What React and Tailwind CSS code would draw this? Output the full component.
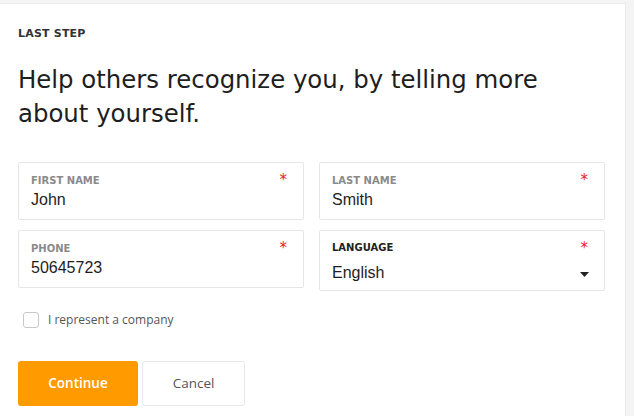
export default function App() {
  const mont = { fontFamily: '"DejaVu Sans", "Noto Sans", sans-serif' };
  return (
    <div className="min-h-screen bg-[#f4f4f4] pt-[3px] pr-[8px]" style={mont}>
      <div className="h-[413px] bg-white border border-l-0 border-b-0 border-[#ebebeb] pl-[18px] pr-[20px] pt-[23px]">
        {/* STEP */}
        <div className="text-[11px] font-bold text-[#333] leading-[14px] tracking-[0.2px]">LAST STEP</div>

        {/* TITLE */}
        <h1 className="mt-[22px] text-[24.4px] leading-[34px] text-[#1e1e1e]">
          Help others recognize you, by telling more
          <br />
          about yourself.
        </h1>

        {/* FIELDS */}
        <div className="mt-[31px] grid grid-cols-2 gap-x-[15px] gap-y-[10px] items-start">
          <Field label="FIRST NAME" value="John" />
          <Field label="LAST NAME" value="Smith" />
          <Field label="PHONE" value="50645723" />
          <div className="relative h-[61px] border border-[#e6e6e6] rounded-[2px] px-[12px] pt-[10px]">
            <div className="text-[10px] font-bold text-[#222] leading-[14px]">LANGUAGE</div>
            <span className="absolute right-[16px] top-[10px] text-[15px] text-[#e8231f] leading-none">*</span>
            <div className="mt-[8px] flex items-center justify-between pr-[3px]">
              <span className="text-[16px] text-[#1e1e1e] leading-[20px]" style={{ fontFamily: '"Liberation Sans", Arial, sans-serif' }}>English</span>
              <svg width="9" height="5" viewBox="0 0 9 5" className="mt-[2px]">
                <path d="M0 0h9L4.5 5z" fill="#222" />
              </svg>
            </div>
          </div>
        </div>

        {/* CHECKBOX */}
        <label className="mt-[20px] ml-[5px] flex items-center gap-[9px]">
          <span className="w-[16px] h-[16px] border border-[#c8c8c8] rounded-[3px] bg-white" />
          <span className="text-[12px] text-[#555]" style={{ fontFamily: '"Open Sans", sans-serif' }}>I represent a company</span>
        </label>

        {/* ACTIONS */}
        <div className="mt-[32px] flex gap-[4px]" style={{ fontFamily: '"Open Sans", sans-serif' }}>
          <button className="w-[120px] h-[45px] bg-[#ff9a00] rounded-[3px] text-white text-[13.5px] font-semibold">Continue</button>
          <button className="w-[103px] h-[45px] bg-white border border-[#e8e8e8] rounded-[3px] text-[#555] text-[13.5px]">Cancel</button>
        </div>
      </div>
    </div>
  );
}

function Field({ label, value }) {
  return (
    <div className="relative h-[58px] border border-[#e6e6e6] rounded-[2px] px-[12px] pt-[11px]">
      <div className="text-[10px] font-semibold text-[#8a8a8a] leading-[14px]">{label}</div>
      <span className="absolute right-[16px] top-[10px] text-[15px] text-[#e8231f] leading-none">*</span>
      <div className="mt-[2px] text-[16px] text-[#1e1e1e] leading-[20px]" style={{ fontFamily: '"Liberation Sans", Arial, sans-serif' }}>{value}</div>
    </div>
  );
}
